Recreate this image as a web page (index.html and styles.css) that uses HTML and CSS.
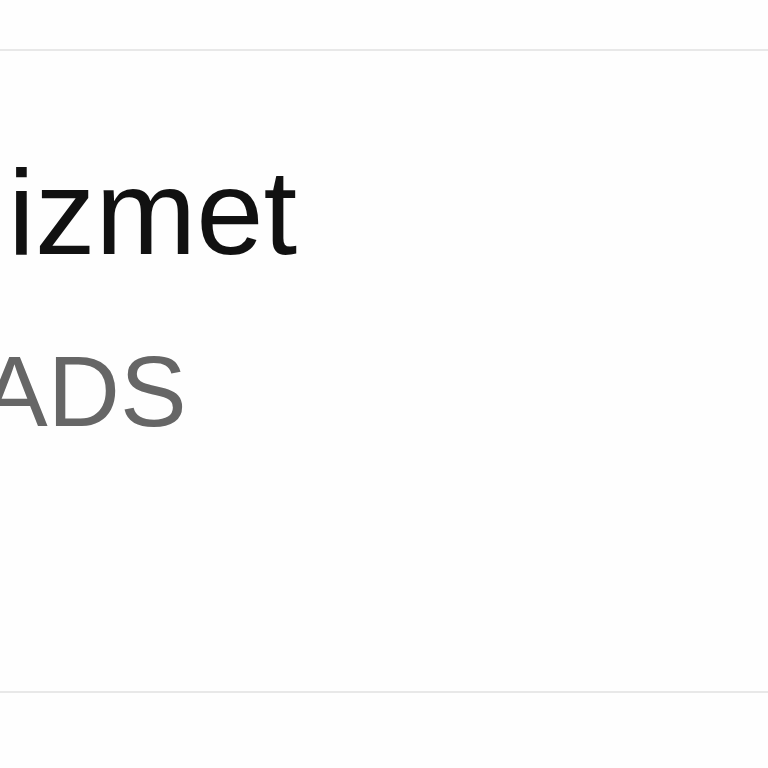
FILE: index.html
```html
<!DOCTYPE html>
<html>
<head>
<meta charset="utf-8">
<link rel="stylesheet" href="styles.css">
</head>
<body>
<div class="top"></div>
<section class="card">
  <h1 class="title">izmet</h1>
  <p class="subtitle">ADS</p>
</section>
</body>
</html>
```
FILE: styles.css
```css
html, body {
  margin: 0;
  padding: 0;
  background: #fefefe;
  overflow: hidden;
}
body {
  width: 768px;
  height: 768px;
  font-family: "Liberation Sans", Arial, sans-serif;
}
.top {
  height: 49px;
}
.card {
  border-top: 2px solid #e8e8e8;
  border-bottom: 2px solid #e8e8e8;
  background: #fefefe;
  padding: 89px 0 240px 0;
}
.title {
  margin: 0 0 0 8px;
  font-size: 121px;
  line-height: 1.2;
  font-weight: 400;
  color: #111111;
}
.subtitle {
  margin: 46px 0 0 -19px;
  font-size: 100px;
  line-height: 1.2;
  color: #666666;
}
```
